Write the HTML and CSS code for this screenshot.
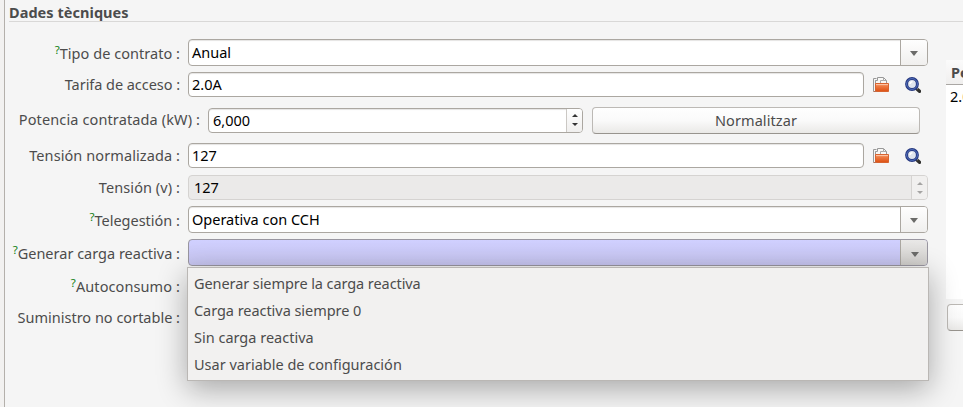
FILE: index.html
```html
<!DOCTYPE html>
<html lang="ca">
<head>
<meta charset="utf-8">
<title>Dades tècniques</title>
<link rel="stylesheet" href="styles.css">
</head>
<body>
<svg class="defs" width="0" height="0">
  <defs>
    <linearGradient id="orange" x1="0" y1="0" x2="0" y2="1"><stop offset="0" stop-color="#f9a87c"/><stop offset=".35" stop-color="#ee7a42"/><stop offset="1" stop-color="#dc4f12"/></linearGradient>
    <symbol id="folder" viewBox="0 0 16 16">
      <path d="M.5 14.500V1.500h3M2.500 14V3.500" fill="none" stroke="#999"/>
      <path d="M2.500 13V3.500h2v-3h6l3 3V8" fill="#f8f8f6" stroke="#999"/>
      <path d="M7.500 6V3.500h3M10.500.500v3h3" fill="none" stroke="#aaa"/>
      <path d="M2.500 6.500h13v8h-13z" fill="url(#orange)" stroke="#d8632f"/>
      <path d="M3 7.500h12" stroke="#fbc2a2"/>
      <path d="M.500 14.500h3" stroke="#b96e50"/>
    </symbol>
    <symbol id="search" viewBox="0 0 16 16">
      <path d="M12 12l2.500 2.300" stroke="#30302e" stroke-width="3.400" stroke-linecap="round"/>
      <path d="M11.300 10.600l1.500 1.400" stroke="#99988a" stroke-width="1.600"/>
      <circle cx="7" cy="7" r="5.400" fill="#dfe5ee" stroke="#25377f" stroke-width="3"/>
      <circle cx="7" cy="7" r="5.400" fill="none" stroke="#5271be" stroke-width="1"/>
      <path d="M5 7a2.500 2.500 0 0 1 2.500-2.300" fill="none" stroke="#fff" stroke-width="1.500"/>
    </symbol>
  </defs>
</svg>
<div class="window">
  <main class="panel">
    <h1 class="title">Dades tècniques</h1>
    <div class="form">
      <div class="row combo-row"><label class="l1"><sup>?</sup>Tipo de contrato :</label><div class="field combo"><span class="value v1">Anual</span><i class="drop"></i></div></div>
      <div class="row r2"><label class="l2">Tarifa de acceso :</label><div class="field"><span class="value v2">2.0A</span></div><svg class="icon folder"><use href="#folder"/></svg><svg class="icon"><use href="#search"/></svg></div>
      <div class="row r3"><label class="l3">Potencia contratada (kW) :</label><div class="field spin"><span class="value v3">6,000</span><i class="steps"></i></div><button class="button">Normalitzar</button></div>
      <div class="row r4"><label class="l4">Tensión normalizada :</label><div class="field"><span class="value v4">127</span></div><svg class="icon folder"><use href="#folder"/></svg><svg class="icon"><use href="#search"/></svg></div>
      <div class="row r5"><label class="l5">Tensión (v) :</label><div class="field spin disabled"><span class="value v4">127</span><i class="steps"></i></div></div>
      <div class="row combo-row r6"><label class="l6"><sup>?</sup>Telegestión :</label><div class="field combo"><span class="value v6">Operativa con CCH</span><i class="drop"></i></div></div>
      <div class="row combo-row r7"><label class="l7"><sup>?</sup>Generar carga reactiva :</label><div class="field combo open"><i class="drop"></i>
        <div class="menu"><div class="m1">Generar siempre la carga reactiva</div><div class="m2">Carga reactiva siempre 0</div><div>Sin carga reactiva</div><div>Usar variable de configuración</div></div>
      </div></div>
      <div class="row combo-row r8"><label class="l8"><sup>?</sup>Autoconsumo :</label></div>
      <div class="row r9"><label class="l9">Suministro no cortable :</label></div>
    </div>
  </main>
  <aside class="side">
    <div class="table"><div class="head">Pe</div><div class="cell">2.0</div></div>
    <button class="button side-button"></button>
  </aside>
</div>
</body>
</html>
```
FILE: styles.css
```css
* { box-sizing: border-box; }
body { margin: 0; height: 407px; overflow: hidden; background: #f5f5f5; color: #4c4c4c; font: 14.5px/20px "Noto Sans", sans-serif; }
.defs { display: block; }
.window { display: flex; height: 407px; padding-left: 4px; background: #f2f1f0; }
.panel { width: 942px; border-left: 1px solid #b4b0ab; background: #f5f5f5; flex: none; }
.title { position: relative; z-index: 1; height: 22px; margin: 0 -18px 17px 4px; padding-top: 3px; border-bottom: 1px solid #d9d8d7; font-size: 14.5px; line-height: 19px; letter-spacing: .05px; white-space: nowrap; }
.form { display: flex; flex-direction: column; width: 923px; }
.row { display: flex; height: 25px; align-items: center; }
.combo-row { height: 27px; }
.r2 { margin-top: 6px; }
.r3 { margin-top: 9px; height: 28px; }
.r4 { margin-top: 9px; }
.r5 { margin-top: 7px; }
.r6, .r7, .r8, .r9 { margin-top: 6px; }
label { width: 175px; margin-right: 8px; padding-bottom: 2px; text-align: right; white-space: nowrap; flex: none; }
.r3 label { width: 195px; }
.combo-row label { padding: 0; }
.l1 { letter-spacing: .04px; }
.l2 { letter-spacing: -.05px; }
.l3 { letter-spacing: .12px; }
.l4 { letter-spacing: .09px; }
.l5 { letter-spacing: .08px; }
.l8 { letter-spacing: .1px; }
sup { color: #118011; font-size: 11.5px; line-height: 0; vertical-align: 5px; }
.field { position: relative; display: flex; flex: 1; height: 100%; align-items: center; border: 1px solid #aba7a1; border-radius: 4px; background: #fff; color: #000; padding-left: 3px; box-shadow: inset 0 1px 1px #e5e4e3; }
.value { flex: 1; white-space: nowrap; padding-bottom: 2px; }
.r3 .field { flex: none; width: 375px; height: 25px; padding-left: 4px; }
.v3 { padding-bottom: 1px; }
.folder { margin-left: 9px; margin-right: 16px; }
.icon { width: 16px; height: 16px; flex: none; }
.icon:last-child { margin-right: 7px; }
.drop, .steps { margin-left: auto; align-self: stretch; background: linear-gradient(#fefefe, #f0efee); border-radius: 0 3px 3px 0; flex: none; display: flex; align-items: center; justify-content: center; }
.drop { width: 27px; border-left: 1px solid #aba7a1; }
.drop::after { content: ""; border: 4px solid transparent; border-top: 5px solid #6b6b69; border-bottom: 0; margin-top: 2px; }
.steps { width: 16px; border-left: 1px solid #cbc8c4; flex-direction: column; gap: 6px; }
.steps::before, .steps::after { content: ""; border: 3px solid transparent; }
.steps::before { border-bottom-color: #333; border-top: 0; }
.steps::after { border-top-color: #333; border-bottom: 0; }
.disabled { background: #ebeae9; border-color: #d5d3d1; box-shadow: none; padding-left: 5px; }
.disabled .steps { background: #f1f0ef; border-color: #d5d3d1; }
.disabled .steps::before { border-bottom-color: #a5a4a3; }
.disabled .steps::after { border-top-color: #a5a4a3; }
.open { background: linear-gradient(#d0d0ff, #c6c4ef); border-color: #9996a0; box-shadow: none; }
.open .drop { background: linear-gradient(#e9e8e7, #d1cfcc); }
.open .drop::after { margin: 4px 0 0 2px; }
.menu { position: absolute; z-index: 2; top: 27px; left: -2px; width: 742px; height: 114px; padding: 2px 6px; background: #f2f1f0; border: 1px solid #bab7b4; color: #4c4c4c; box-shadow: 0 8px 28px rgba(0,0,0,.32); white-space: nowrap; }
.menu div { height: 27px; line-height: 27px; }
.m1 { letter-spacing: -.08px; }
.m2 { letter-spacing: -.05px; }
.button { margin: 0 0 0 9px; padding: 0; width: 328px; height: 27px; border: 1px solid #bcb9b5; border-bottom-color: #98948e; border-radius: 4px; background: linear-gradient(#fefefe, #fafafa 50%, #eae9e7); font: inherit; color: #4c4c4c; letter-spacing: .08px; }
.side { width: 17px; padding-top: 60px; overflow: hidden; flex: none; background: #f5f5f5; }
.table { height: 239px; background: #fff; color: #000; overflow: hidden; white-space: nowrap; }
.head { height: 25px; padding: 2px 0 0 5px; background: linear-gradient(#fbfbfb, #f0efee); border-bottom: 1px solid #aaa7a4; color: #4c4c4c; font-weight: 700; }
.cell { padding: 1px 0 0 4px; }
.side-button { display: block; margin: 5px 0 0 1px; width: 40px; }
```
